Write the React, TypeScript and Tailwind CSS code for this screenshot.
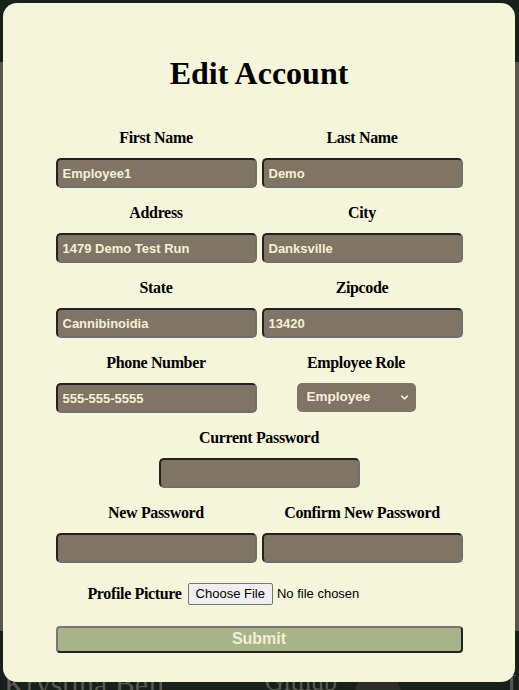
import { ChevronDown } from "lucide-react";

const inputCls =
  "h-[30px] w-full rounded-[5px] border-2 border-t-[#222] border-l-[#222] border-b-[#6f6f6f] border-r-[#6f6f6f] bg-[#807565] px-[5px] font-['Liberation_Sans',Arial,sans-serif] text-[13px] font-bold text-[#f5f1d6] outline-none";

const labelCls =
  "block text-center font-['Liberation_Serif','Times_New_Roman',serif] text-[16px] font-bold leading-[18px] tracking-[-0.35px] text-black";

function Field({
  label,
  value = "",
  type = "text",
}: {
  label: string;
  value?: string;
  type?: string;
}) {
  return (
    <div className="flex flex-col">
      <label className={labelCls}>{label}</label>
      <input type={type} defaultValue={value} className={`mt-[11px] ${inputCls}`} />
    </div>
  );
}

export default function App() {
  return (
    <div className="relative h-[690px] w-[519px] overflow-hidden bg-[#17201a]">
      {/* page behind the modal */}
      <div className="h-[62px] bg-[#17201a]" />
      <div className="h-[569px] bg-[#5c554b]" />
      <div className="flex h-[59px] items-start bg-[#17201a] pt-[38px] font-['Liberation_Serif',serif] text-[30px] leading-none text-[#585b52]">
        <span className="ml-[4px]">Krystina Bell</span>
        <span className="ml-[100px] text-[26px]">Github</span>
        <span className="ml-[18px] mt-[2px] h-[46px] w-[46px] rounded-full bg-[#2c2e2c]" />
        <span className="ml-auto mr-[-6px]">L</span>
      </div>

      {/* modal */}
      <div className="absolute left-[3px] top-[3px] h-[679px] w-[512px] rounded-[14px] bg-[#f5f5dc] pt-[52px]">
        <h1 className="text-center font-['Liberation_Serif','Times_New_Roman',serif] text-[32px] font-bold leading-[37px] text-black">
          Edit Account
        </h1>

        <form className="mx-auto mt-[37px] flex w-[407px] flex-col">
          <div className="grid grid-cols-2 gap-x-[5px] gap-y-[16px]">
            <Field label="First Name" value="Employee1" />
            <Field label="Last Name" value="Demo" />
            <Field label="Address" value="1479 Demo Test Run" />
            <Field label="City" value="Danksville" />
            <Field label="State" value="Cannibinoidia" />
            <Field label="Zipcode" value="13420" />
            <Field label="Phone Number" value="555-555-5555" />
            <div className="mr-[12px] flex flex-col items-center">
              <label className={labelCls}>Employee Role</label>
              <div className="relative mt-[11px]">
                <select
                  defaultValue="Employee"
                  className="h-[29px] w-[119px] appearance-none rounded-[5px] bg-[#807565] pl-[10px] font-['Liberation_Sans',Arial,sans-serif] text-[13.5px] font-bold text-[#f5f1d6] outline-none"
                >
                  <option>Employee</option>
                  <option>Manager</option>
                  <option>Admin</option>
                </select>
                <ChevronDown
                  size={11}
                  strokeWidth={3.2}
                  className="pointer-events-none absolute right-[6px] top-[9px] text-[#f5f1d6]"
                />
              </div>
            </div>
          </div>

          <div className="mx-auto mt-[16px] flex w-[201px] flex-col">
            <label className={labelCls}>Current Password</label>
            <input type="password" className={`mt-[11px] ${inputCls}`} />
          </div>

          <div className="mt-[16px] grid grid-cols-2 gap-x-[5px]">
            <Field label="New Password" type="password" />
            <Field label="Confirm New Password" type="password" />
          </div>

          <div className="mt-[20px] flex items-center justify-center">
            <label className="font-['Liberation_Serif','Times_New_Roman',serif] text-[16px] font-bold leading-[18px] tracking-[-0.35px] text-black">
              Profile Picture
            </label>
            <input
              type="file"
              className="ml-[6px] w-[243px] font-['Liberation_Sans',Arial,sans-serif] text-[13px] text-black file:mr-[4px] file:h-[22px] file:rounded-[2px] file:border file:border-[#767676] file:bg-[#efefef] file:px-[7px] file:text-[13px] file:text-black"
            />
          </div>

          <button
            type="button"
            className="mt-[21px] h-[27px] w-full rounded-[4px] border-2 border-t-[#777] border-l-[#777] border-b-[#222] border-r-[#222] bg-[#a8b38a] pb-[2px] font-['Liberation_Sans',Arial,sans-serif] text-[16px] font-bold leading-none text-[#f2efd6]"
          >
            Submit
          </button>
        </form>
      </div>
    </div>
  );
}
